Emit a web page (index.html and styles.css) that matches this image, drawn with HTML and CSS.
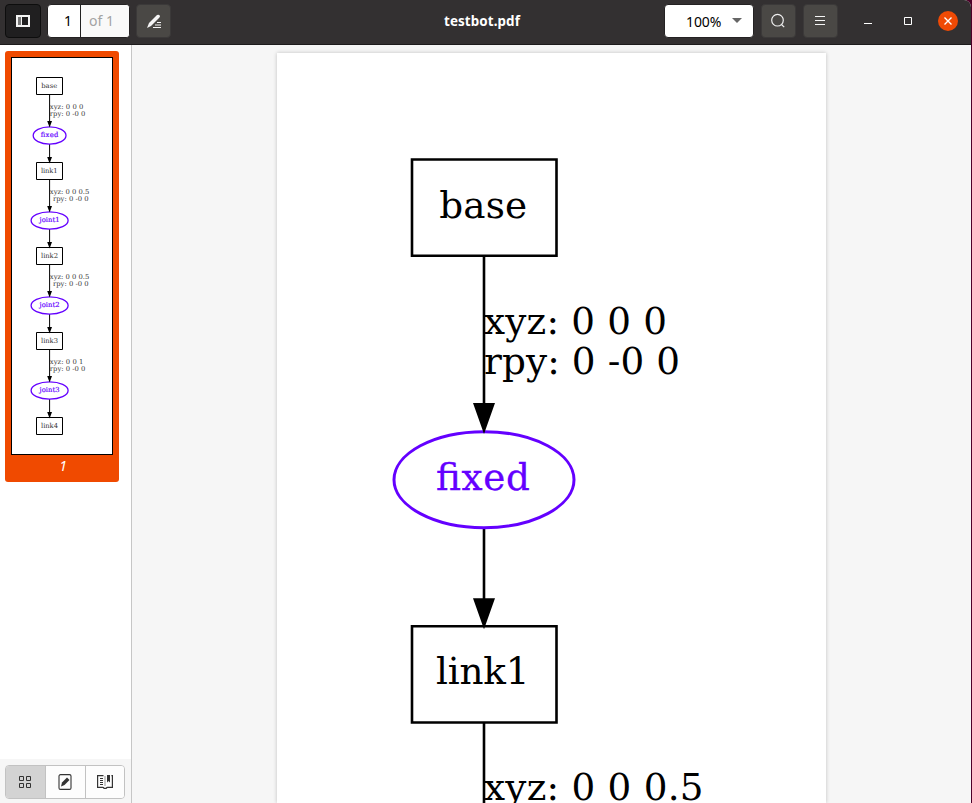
FILE: index.html
```html
<!DOCTYPE html>
<html lang="en">
<head>
<meta charset="utf-8">
<title>testbot.pdf</title>
<link rel="stylesheet" href="styles.css">
</head>
<body>
<div class="window">
  <header class="titlebar">
    <div class="tools">
      <button class="tool side-toggle active" aria-label="Side pane"><svg width="16" height="16" viewBox="0 0 16 16"><path fill="#f4f4f4" fill-rule="evenodd" d="M1 2h14v12H1zM7 4v8h6V4z"/><path fill="#777" d="M3 4h3v8H3z"/></svg></button>
      <div class="pager"><span class="current">1</span><span class="total">of 1</span></div>
      <button class="tool" aria-label="Annotate"><svg width="16" height="16" viewBox="0 0 16 16"><path fill="#f5f5f5" d="M1 15l2-5 8-8q2-1 3 1 0 1-1 2l-8 8zM11 9h4v1h-4zM9 11.500h6v1H9zM7 14h8v1H7z"/></svg></button>
    </div>
    <h1 class="title">testbot.pdf</h1>
    <div class="controls">
      <button class="zoom"><span>100%</span><svg width="10" height="6" viewBox="0 0 10 6"><path fill="#666" d="M0 0h10L5 5z"/></svg></button>
      <button class="tool" aria-label="Find"><svg width="16" height="16" viewBox="0 0 16 16"><g fill="none" stroke="#eee" stroke-width="1.200"><circle cx="7.500" cy="7.200" r="5.800"/><path d="M11.500 11.500l2.700 2.700"/></g></svg></button>
      <button class="tool" aria-label="Menu"><svg width="16" height="16" viewBox="0 0 16 16"><path fill="#f5f5f5" d="M3 3h10v1H3zM3 7h10v1H3zM3 11h10v1H3z"/></svg></button>
      <div class="window-buttons">
        <svg width="20" height="20" viewBox="0 0 20 20"><path fill="#fff" d="M6 12h8v1H6z"/></svg>
        <svg width="20" height="20" viewBox="0 0 20 20"><path fill="none" stroke="#fff" d="M6.500 6.500h7v7h-7z"/></svg>
        <svg width="20" height="20" viewBox="0 0 20 20"><circle cx="10" cy="10" r="10" fill="#f04a05"/><path fill="none" stroke="#fff" stroke-width="1.400" d="M6.500 6.500l7 7M13.500 6.500l-7 7"/></svg>
      </div>
    </div>
  </header>
  <div class="body">
    <aside class="sidebar">
      <div class="thumbs">
        <figure class="thumb">
          <svg class="mini" width="102" height="398" viewBox="11 57 102 398">
            <rect x="11.500" y="57.500" width="101" height="397" fill="#fff" stroke="#000"/>
            <g class="mini-shape">
              <path d="M36.500 77.500h26v17h-26zM36.500 162.500h26v17h-26zM36.500 247.500h26v17h-26zM36.500 332.500h26v17h-26zM36.500 417.500h26v17h-26z"/>
            </g>
            <g class="mini-line">
              <path d="M49.600 95v28M49.600 144v15M49.600 180v28M49.600 229v15M49.600 265v28M49.600 314v15M49.600 350v28M49.600 399v15"/>
            </g>
            <g class="mini-oval">
              <ellipse cx="49.600" cy="135.500" rx="16.400" ry="8.700"/>
              <ellipse cx="49.600" cy="220.500" rx="18.500" ry="8.700"/>
              <ellipse cx="49.600" cy="305.500" rx="18.500" ry="8.700"/>
              <ellipse cx="49.600" cy="390.500" rx="18.500" ry="8.700"/>
            </g>
            <path d="M47.200 121h4.800l-2.400 6.500zM47.200 157h4.800l-2.400 6.500zM47.200 206h4.800l-2.400 6.500zM47.200 242h4.800l-2.400 6.500zM47.200 291h4.800l-2.400 6.500zM47.200 327h4.800l-2.400 6.500zM47.200 376h4.800l-2.400 6.500zM47.200 412h4.800l-2.400 6.500z"/>
            <g class="mini-text">
              <text x="41.200" y="88" textLength="16">base</text>
              <text x="49.800" y="109.200" textLength="33.500">xyz: 0 0 0</text>
              <text x="49.800" y="116.200" textLength="35.500">rpy: 0 -0 0</text>
              <text x="41" y="173" textLength="16.500">link1</text>
              <text x="49.800" y="194.200" textLength="39.500">xyz: 0 0 0.5</text>
              <text x="53" y="201.200" textLength="35.500">rpy: 0 -0 0</text>
              <text x="41" y="258" textLength="17">link2</text>
              <text x="49.800" y="279.200" textLength="39.500">xyz: 0 0 0.5</text>
              <text x="53" y="286.200" textLength="35.500">rpy: 0 -0 0</text>
              <text x="41" y="343" textLength="17">link3</text>
              <text x="49.800" y="364.200" textLength="33.500">xyz: 0 0 1</text>
              <text x="49.800" y="371.200" textLength="35.500">rpy: 0 -0 0</text>
              <text x="41" y="428" textLength="17">link4</text>
            </g>
            <g class="mini-text violet">
              <text x="40.800" y="137.200" textLength="17.500">fixed</text>
              <text x="39.500" y="222.200" textLength="20">joint1</text>
              <text x="39.500" y="307.200" textLength="20">joint2</text>
              <text x="39.500" y="392.200" textLength="20">joint3</text>
            </g>
          </svg>
          <figcaption>1</figcaption>
        </figure>
      </div>
      <nav class="switcher">
        <button class="selected" aria-label="Thumbnails"><svg width="16" height="16" viewBox="0 0 16 16"><path fill="none" stroke="#333" d="M2.500 2.500h4v4h-4zM9.500 2.500h4v4h-4zM2.500 9.500h4v4h-4zM9.500 9.500h4v4h-4z"/></svg></button>
        <button aria-label="Annotations"><svg width="16" height="16" viewBox="0 0 16 16"><rect x="2" y=".600" width="12" height="14.800" rx="1.500" fill="none" stroke="#333" stroke-width="1.100"/><path fill="#333" d="M4 12.500l1-4 5-5 2.500 2.500-5 5z"/></svg></button>
        <button aria-label="Bookmarks"><svg width="16" height="16" viewBox="0 0 16 16"><path fill="none" stroke="#333" stroke-width="1.200" d="M6.500 1.600H.600v11.800h5q1 0 1.500 1h2q.5-1 1.500-1h4.800V1.600h-1"/><path fill="#333" d="M10 1h3v7.500L11.500 7 10 8.500zM3 4h3v1H3zM3 6h3v1H3zM3 8h3v1H3zM3 10h3v1H3zM7.500 2.500h1v1h-1zM7.500 4.500h1v1h-1zM7.500 6.500h1v1h-1zM7.500 8.500h1v1h-1zM7.500 10.500h1v1h-1z"/></svg></button>
      </nav>
    </aside>
    <main class="view">
      <article class="page">
        <svg class="graph" width="549" height="750" viewBox="277 53 549 750">
          <g class="edge"><path d="M484 256v148M484 528v71M484 723v80"/></g>
          <g class="node"><path d="M412 159.500h144.500v96.300H412zM412 626.300h144.500v96.200H412z"/></g>
          <ellipse class="joint" cx="484" cy="479.700" rx="90" ry="48"/>
          <path d="M473 403h22l-11 31zM473 598.200h22l-11 31z"/>
          <g class="label">
            <text x="439.200" y="218" textLength="88">base</text>
            <text x="484" y="334" textLength="183">xyz: 0 0 0</text>
            <text x="484" y="374" textLength="196">rpy: 0 -0 0</text>
            <text x="436" y="684" textLength="93.500">link1</text>
            <text x="484" y="800" textLength="219.500">xyz: 0 0 0.5</text>
            <text class="violet" x="436" y="490" textLength="94">fixed</text>
          </g>
        </svg>
      </article>
    </main>
  </div>
</div>
</body>
</html>
```
FILE: styles.css
```css
* { box-sizing: border-box; }
body { margin: 0; background: #4d0029; font-family: "Noto Sans", "Open Sans", sans-serif; overflow: hidden; }
button { margin: 0; padding: 0; border: 0; font: inherit; }
svg { display: block; flex: none; }
.window { width: 971px; height: 803px; display: flex; flex-direction: column; overflow: hidden; border-radius: 0 7px 0 0; background: #f6f6f6; }
.titlebar { height: 45px; flex: none; display: grid; grid-template-columns: 1fr auto 1fr; padding: 4px 13px 0 5px; background: #333031; border-bottom: 1px solid #1d1b1c; color: #fff; }
.tools, .controls { display: flex; align-items: flex-start; }
.tools { gap: 6px; }
.tool { width: 35px; height: 34px; display: flex; align-items: center; justify-content: center; background: #4a4845; border: 1px solid #3b3939; border-radius: 4px; }
.side-toggle { width: 36px; }
.tool.active { background: #201f20; border-color: #0d0d0d; }
.pager { width: 83px; height: 34px; display: flex; background: #fff; border: 1px solid #242223; border-radius: 4px; font-size: 14px; line-height: 32px; }
.current { width: 33px; padding-right: 8px; text-align: right; color: #000; border-right: 1px solid #222; }
.total { padding-left: 8px; color: #a3a3a3; background: #f9f9f9; flex: 1; border-radius: 0 3px 3px 0; }
.title { margin: 0 0 0 1px; font-size: 13.4px; line-height: 34px; font-weight: 700; letter-spacing: .1px; }
.controls { justify-content: flex-end; gap: 7px; }
.controls .tool { padding-right: 1px; }
.zoom { width: 90px; height: 34px; display: flex; align-items: center; gap: 11px; padding-left: 21px; background: #fff; border: 1px solid #242223; border-radius: 4px; font-size: 14px; letter-spacing: -.1px; color: #000; }
.window-buttons { display: flex; gap: 20px; margin: 7px 0 0 13px; }
.body { flex: 1; display: flex; min-height: 0; }
.sidebar { width: 132px; border-right: 1px solid #c6c6c6; display: flex; flex-direction: column; background: #f6f6f6; }
.thumbs { height: 714px; padding: 6px 5px; background: #fff; }
.thumb { margin: 0; width: 114px; height: 431px; padding: 6px; border-radius: 3px; background: #f04a00; }
.thumb figcaption { padding-left: 2px; text-align: center; color: #fff; font-size: 14px; line-height: 22px; font-style: italic; }
.mini-shape, .mini-line, .mini-oval { fill: none; stroke: #000; stroke-width: 1; }
.mini-oval { stroke: #6400ff; stroke-width: 1.3; }
.mini-text, .label { font-family: "DejaVu Serif", serif; }
.mini-text { font-size: 6.8px; fill: #333; }
.mini-text.violet, .violet { fill: #6400ff; stroke: #6400ff; }
.mini-text.violet { stroke-width: .18px; }
.label .violet { stroke-width: .3px; }
.switcher { display: flex; width: 120px; height: 34px; margin: 6px 5px 4px; border: 1px solid #c2c2c2; border-radius: 4px; overflow: hidden; }
.switcher button { width: 40px; padding-right: 2px; display: flex; align-items: center; justify-content: center; background: #fdfdfd; border-left: 1px solid #c2c2c2; }
.switcher button:first-child { width: 39px; padding-right: 1px; border-left: 0; }
.switcher button:last-child { width: 39px; padding-right: 0; }
.switcher .selected { background: #d3d3d3; }
.view { flex: 1; padding: 8px 145px 0; background: #f6f6f6; }
.page { width: 549px; height: 750px; background: #fff; box-shadow: 0 0 4px rgba(0,0,0,.22); }
.node, .edge, .joint { fill: none; stroke: #000; stroke-width: 2.6; }
.joint { stroke: #6400ff; stroke-width: 3; }
.label { font-size: 37.33px; }
```
